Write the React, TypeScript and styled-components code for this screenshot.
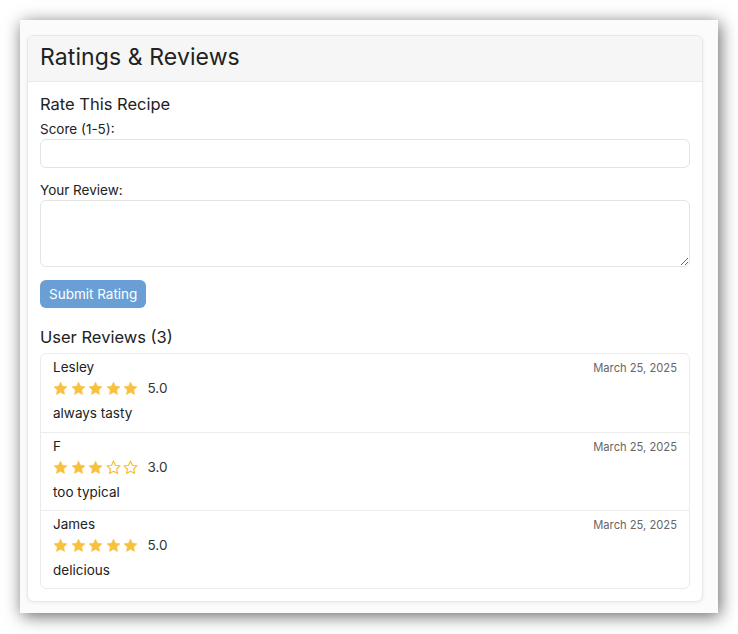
import React from "react";
import styled, { createGlobalStyle } from "styled-components";

const Global = createGlobalStyle`
  html, body { margin: 0; padding: 0; background: #ffffff; }
  body { font-family: "Inter", "Noto Sans", sans-serif; color: #222; }
  * { box-sizing: border-box; }
`;

const Page = styled.div`
  padding: 20px 20px 21px 20px;
  width: 738px;
  height: 634px;
`;

const Frame = styled.div`
  width: 698px;
  height: 593px;
  background: #fbfbfb;
  box-shadow: 2px 3px 16px rgba(0, 0, 0, 0.6);
  padding: 15px 15px 0 7px;
`;

const Card = styled.section`
  background: #fff;
  border: 1px solid #e8e8e8;
  border-radius: 7px;
  box-shadow: 0 1px 4px rgba(0, 0, 0, 0.06);
  overflow: hidden;
`;

const CardHeader = styled.header`
  background: #f6f6f6;
  border-bottom: 1px solid #e9e9e9;
  height: 46px;
  display: flex;
  align-items: center;
  padding: 0 12px 3px 12px;
`;

const Title = styled.h2`
  margin: 0;
  font-size: 23px;
  font-weight: 400;
  color: #222;
  letter-spacing: 0.1px;
`;

const Body = styled.div`
  padding: 11px 12px 12px 12px;
  display: flex;
  flex-direction: column;
`;

const SectionTitle = styled.h3`
  margin: 0;
  font-size: 16.5px;
  font-weight: 400;
  line-height: 22px;
  color: #222;
`;

const Label = styled.label<{ $mt?: number }>`
  display: block;
  font-size: 13.5px;
  line-height: 20px;
  color: #222;
  margin-top: ${(p) => p.$mt ?? 0}px;
`;

const Input = styled.input`
  display: block;
  width: 100%;
  height: 29px;
  margin: 0;
  border: 1px solid #e4e4e4;
  border-radius: 6px;
  background: #fff;
  outline: none;
`;

const TextArea = styled.textarea`
  display: block;
  width: 100%;
  height: 67px;
  margin: 0;
  border: 1px solid #e4e4e4;
  border-radius: 6px;
  background: #fff;
  outline: none;
  resize: vertical;
`;

const Button = styled.button`
  align-self: flex-start;
  margin-top: 13px;
  height: 28px;
  padding: 0 9px;
  border: none;
  border-radius: 6px;
  background: #6a9fd5;
  color: #fff;
  font-family: "Inter", "Noto Sans", sans-serif;
  font-size: 13.5px;
`;

const ListTitle = styled(SectionTitle)`
  margin-top: 18px;
`;

const List = styled.div`
  margin-top: 5px;
  border: 1px solid #ebebeb;
  border-radius: 6px;
`;

const Item = styled.div`
  height: 78px;
  padding: 4px 12px 0 12px;
  border-top: 1px solid #ececec;
  &:first-child { border-top: none; }
`;

const Row = styled.div`
  display: flex;
  justify-content: space-between;
  align-items: baseline;
`;

const Name = styled.div`
  font-size: 13.5px;
  line-height: 18px;
  color: #222;
`;

const DateText = styled.div`
  font-size: 11.2px;
  color: #666;
`;

const StarRow = styled.div`
  display: flex;
  align-items: center;
  gap: 2.5px;
  margin-top: 3px;
  height: 18px;
`;

const Score = styled.span`
  font-size: 13.5px;
  color: #333;
  margin-left: 7px;
`;

const Comment = styled.div`
  font-size: 13.5px;
  color: #222;
  margin-top: 8px;
`;

const STAR = "M12 1.8l3.1 6.6 7.2.9-5.3 5 1.4 7.1L12 17.9l-6.4 3.5 1.4-7.1-5.3-5 7.2-.9z";

const Star = ({ filled }: { filled: boolean }) => (
  <svg width="15" height="15" viewBox="0 0 24 24">
    <path
      d={STAR}
      fill={filled ? "#f7c13e" : "none"}
      stroke="#f7c13e"
      strokeWidth={filled ? 1 : 2}
      strokeLinejoin="round"
    />
  </svg>
);

const reviews = [
  { name: "Lesley", score: 5, text: "always tasty" },
  { name: "F", score: 3, text: "too typical" },
  { name: "James", score: 5, text: "delicious" },
];

export default function App() {
  return (
    <>
      <Global />
      <Page>
        <Frame>
          <Card>
            <CardHeader>
              <Title>Ratings &amp; Reviews</Title>
            </CardHeader>
            <Body>
              <SectionTitle>Rate This Recipe</SectionTitle>
              <Label $mt={4}>Score (1-5):</Label>
              <Input type="number" />
              <Label $mt={12}>Your Review:</Label>
              <TextArea />
              <Button>Submit Rating</Button>
              <ListTitle>User Reviews (3)</ListTitle>
              <List>
                {reviews.map((r) => (
                  <Item key={r.name}>
                    <Row>
                      <Name>{r.name}</Name>
                      <DateText>March 25, 2025</DateText>
                    </Row>
                    <StarRow>
                      {[1, 2, 3, 4, 5].map((i) => (
                        <Star key={i} filled={i <= r.score} />
                      ))}
                      <Score>{r.score.toFixed(1)}</Score>
                    </StarRow>
                    <Comment>{r.text}</Comment>
                  </Item>
                ))}
              </List>
            </Body>
          </Card>
        </Frame>
      </Page>
    </>
  );
}
